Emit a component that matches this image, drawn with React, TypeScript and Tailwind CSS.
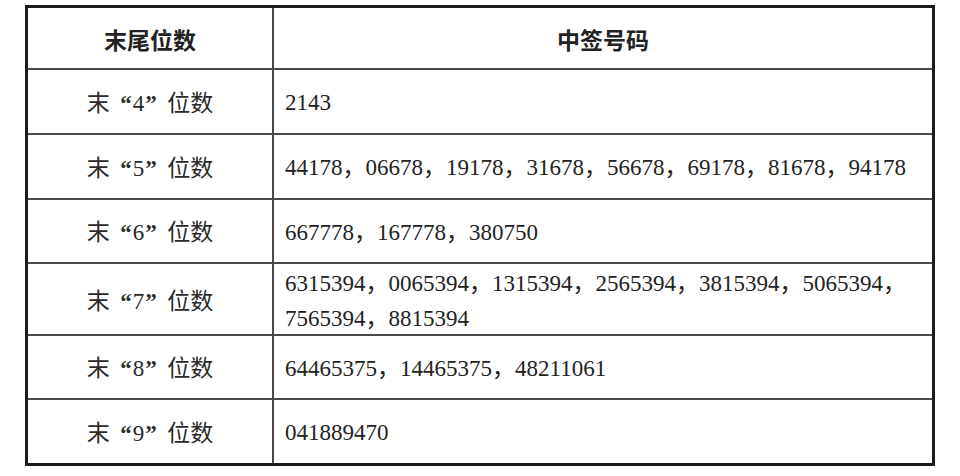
import React from 'react';

type Row = {
  digit: string;
  lines: string[];
  height: string;
};

const rows: Row[] = [
  { digit: '4', lines: ['2143'], height: 'h-[65px]' },
  { digit: '5', lines: ['44178，06678，19178，31678，56678，69178，81678，94178'], height: 'h-[65px]' },
  { digit: '6', lines: ['667778，167778，380750'], height: 'h-[64px]' },
  {
    digit: '7',
    lines: ['6315394，0065394，1315394，2565394，3815394，5065394，', '7565394，8815394'],
    height: 'h-[72px]',
  },
  { digit: '8', lines: ['64465375，14465375，48211061'], height: 'h-[64px]' },
  { digit: '9', lines: ['041889470'], height: 'h-[63px]' },
];

const serif = "font-['Liberation_Serif','Noto_Sans_CJK_SC',serif]";
const cjk = "font-['Noto_Sans_CJK_SC',sans-serif]";

const TailLabel: React.FC<{ digit: string }> = ({ digit }) => (
  <span className={`${cjk} text-[23px] text-[#2a2a2a] whitespace-nowrap`}>
    末
    <span className={`${serif} inline-block w-[1em] text-right font-bold pr-[1px]`}>“</span>
    <span className={serif}>{digit}</span>
    <span className={`${serif} inline-block w-[1em] text-left font-bold pl-[1px]`}>”</span>
    位数
  </span>
);

const App: React.FC = () => {
  return (
    <div className="w-[960px] h-[476px] bg-white pt-[5px] pl-[25px]">
      <div className="w-[910px] border-[3px] border-[#1c1c1c]">
        <div className="grid grid-cols-[246px_1fr] h-[62px] border-b-2 border-[#4a4a4a]">
          <div className={`${cjk} flex items-center justify-center pt-[3px] border-r-2 border-[#4a4a4a] text-[23px] font-bold text-[#222]`}>
            末尾位数
          </div>
          <div className={`${cjk} flex items-center justify-center pt-[3px] text-[23px] font-bold text-[#222]`}>
            中签号码
          </div>
        </div>
        {rows.map((row, i) => (
          <div
            key={row.digit}
            className={`grid grid-cols-[246px_1fr] ${row.height} ${i < rows.length - 1 ? 'border-b-2 border-[#4a4a4a]' : ''}`}
          >
            <div className="flex items-center justify-center border-r-2 border-[#4a4a4a] pt-[2px]">
              <TailLabel digit={row.digit} />
            </div>
            <div className={`${serif} flex flex-col justify-center pl-[11px] pt-[2px] text-[23px] leading-[35px] text-[#222] whitespace-nowrap`}>
              {row.lines.map((line) => (
                <span key={line}>{line}</span>
              ))}
            </div>
          </div>
        ))}
      </div>
    </div>
  );
};

export default App;
